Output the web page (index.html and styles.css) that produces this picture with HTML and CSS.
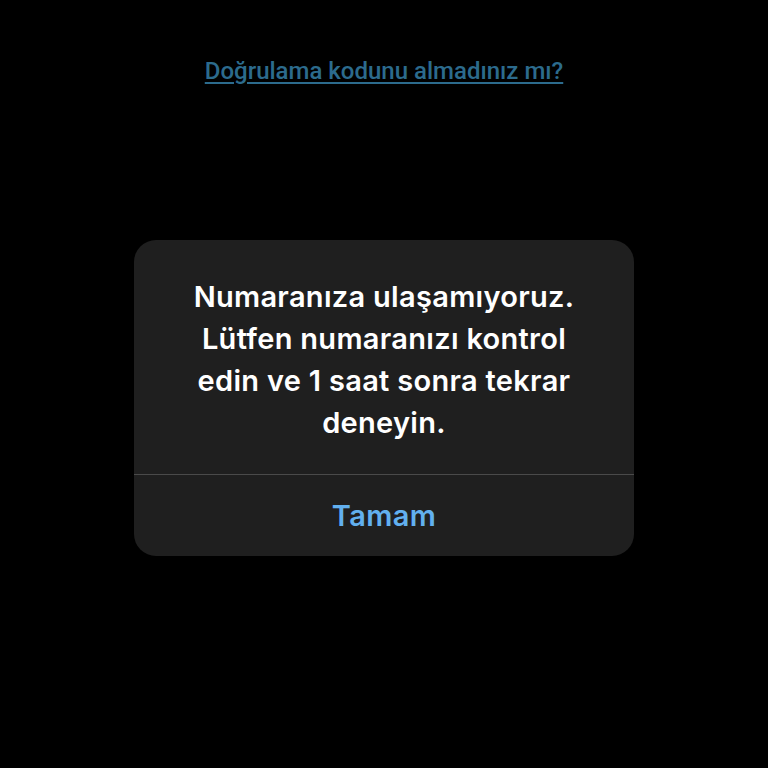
FILE: index.html
```html
<!DOCTYPE html>
<html lang="tr">
<head>
  <meta charset="UTF-8">
  <meta name="viewport" content="width=device-width, initial-scale=1.0">
  <link rel="stylesheet" href="styles.css">
  <title>Doğrulama</title>
</head>
<body>
  <div class="screen">
    <a class="resend-link" href="#">Doğrulama kodunu almadınız mı?</a>

    <div class="alert">
      <p class="alert-message">Numaranıza ulaşamıyoruz. Lütfen numaranızı kontrol edin ve 1 saat sonra tekrar deneyin.</p>
      <button class="alert-button">Tamam</button>
    </div>
  </div>
</body>
</html>
```

FILE: styles.css
```css
* {
  box-sizing: border-box;
}
body {
  margin: 0;
  background-color: #000;
  font-family: Inter, "Noto Sans", sans-serif;
}
.screen {
  width: 768px;
  height: 768px;
  display: flex;
  flex-direction: column;
  align-items: center;
  padding-top: 55px;
}
.resend-link {
  font-family: Roboto, sans-serif;
  font-size: 24px;
  font-weight: 500;
  line-height: 32px;
  color: #2c6b8d;
  text-decoration: underline;
  text-underline-offset: 3px;
}
.alert {
  width: 500px;
  margin-top: 153px;
  background-color: #1f1f1f;
  border-radius: 22px;
  overflow: hidden;
}
.alert-message {
  margin: 0;
  padding: 36px 36px 30px;
  color: #fff;
  font-size: 29px;
  font-weight: 600;
  letter-spacing: 0.3px;
  line-height: 42px;
  text-align: center;
}
.alert-button {
  display: block;
  width: 100%;
  height: 82px;
  border: none;
  border-top: 1px solid #4a4a4a;
  background: none;
  color: #62b0ef;
  font-family: Inter, "Noto Sans", sans-serif;
  font-size: 29px;
  font-weight: 600;
  letter-spacing: 0.4px;
  cursor: pointer;
}
```
